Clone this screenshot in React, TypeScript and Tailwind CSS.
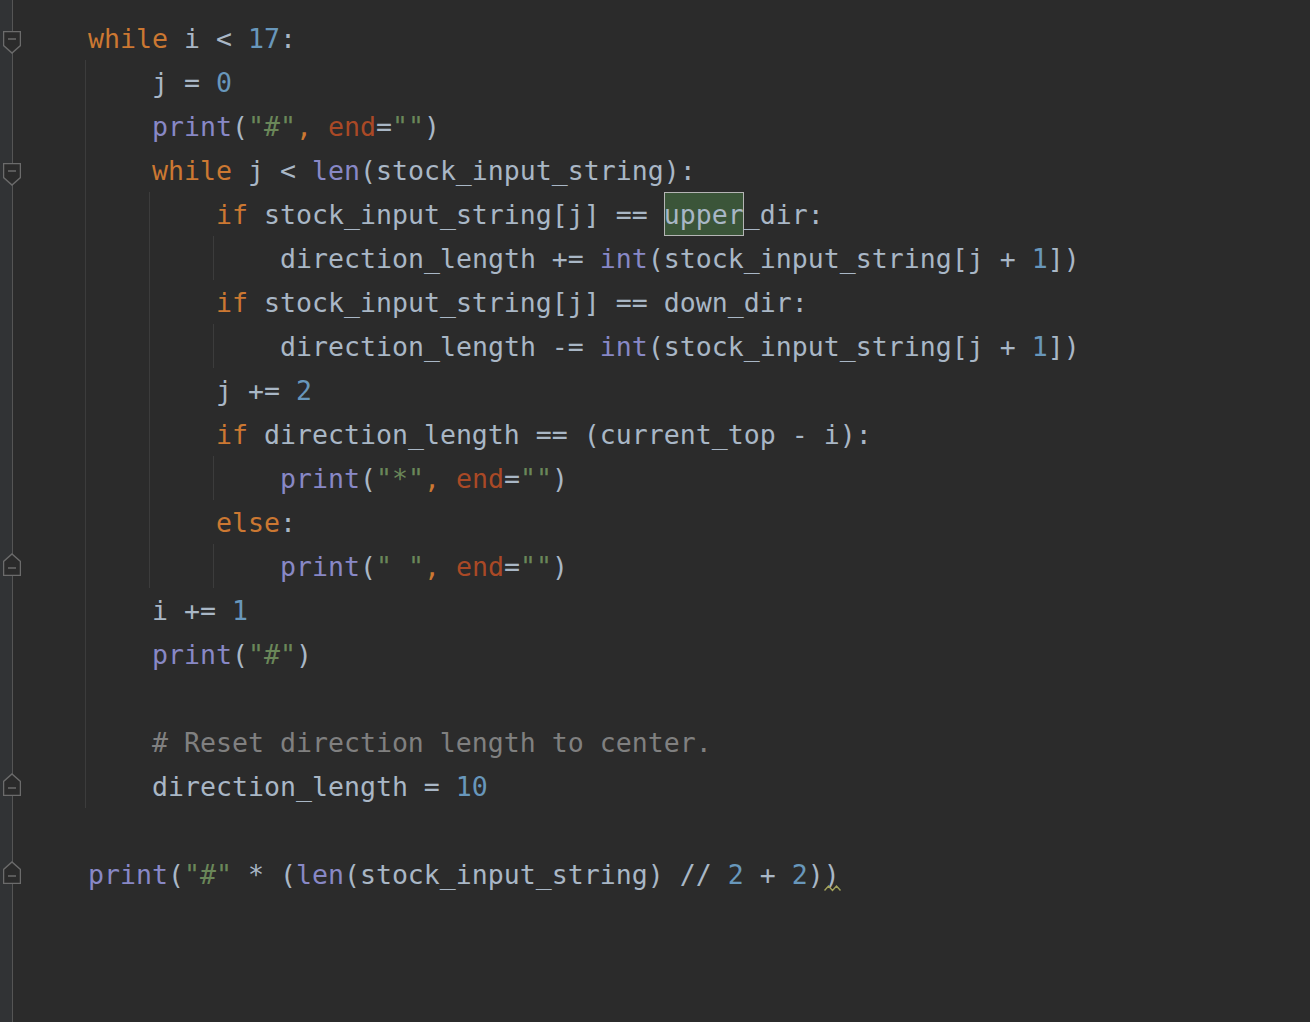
import React from 'react';

type Tok = [string, string];

// Darcula-ish token colours
const kw = 'text-[#cc7832]';
const tx = 'text-[#a9b7c6]';
const num = 'text-[#6897bb]';
const fn = 'text-[#8888c6]';
const str = 'text-[#6a8759]';
const arg = 'text-[#aa4926]';
const cmt = 'text-[#808080]';

type Line = {
  indent: number;
  guides: number[];
  fold?: 'start' | 'end';
  tokens: Tok[];
  mark?: boolean;
};

const lines: Line[] = [
  { indent: 0, guides: [], fold: 'start', tokens: [['while', kw], [' i < ', tx], ['17', num], [':', tx]] },
  { indent: 1, guides: [0], tokens: [['j = ', tx], ['0', num]] },
  { indent: 1, guides: [0], tokens: [['print', fn], ['(', tx], ['"#"', str], [', ', kw], ['end', arg], ['=', tx], ['""', str], [')', tx]] },
  { indent: 1, guides: [0], fold: 'start', tokens: [['while', kw], [' j < ', tx], ['len', fn], ['(stock_input_string):', tx]] },
  { indent: 2, guides: [0, 1], mark: true, tokens: [['if', kw], [' stock_input_string[j] == ', tx]] },
  { indent: 3, guides: [0, 1, 2], tokens: [['direction_length += ', tx], ['int', fn], ['(stock_input_string[j + ', tx], ['1', num], ['])', tx]] },
  { indent: 2, guides: [0, 1], tokens: [['if', kw], [' stock_input_string[j] == down_dir:', tx]] },
  { indent: 3, guides: [0, 1, 2], tokens: [['direction_length -= ', tx], ['int', fn], ['(stock_input_string[j + ', tx], ['1', num], ['])', tx]] },
  { indent: 2, guides: [0, 1], tokens: [['j += ', tx], ['2', num]] },
  { indent: 2, guides: [0, 1], tokens: [['if', kw], [' direction_length == (current_top - i):', tx]] },
  { indent: 3, guides: [0, 1, 2], tokens: [['print', fn], ['(', tx], ['"*"', str], [', ', kw], ['end', arg], ['=', tx], ['""', str], [')', tx]] },
  { indent: 2, guides: [0, 1], tokens: [['else', kw], [':', tx]] },
  { indent: 3, guides: [0, 1, 2], fold: 'end', tokens: [['print', fn], ['(', tx], ['" "', str], [', ', kw], ['end', arg], ['=', tx], ['""', str], [')', tx]] },
  { indent: 1, guides: [0], tokens: [['i += ', tx], ['1', num]] },
  { indent: 1, guides: [0], tokens: [['print', fn], ['(', tx], ['"#"', str], [')', tx]] },
  { indent: 1, guides: [0], tokens: [] },
  { indent: 1, guides: [0], tokens: [['# Reset direction length to center.', cmt]] },
  { indent: 1, guides: [0], fold: 'end', tokens: [['direction_length = ', tx], ['10', num]] },
  { indent: 0, guides: [], tokens: [] },
  { indent: 0, guides: [], fold: 'end', tokens: [['print', fn], ['(', tx], ['"#"', str], [' * (', tx], ['len', fn], ['(stock_input_string) // ', tx], ['2', num], [' + ', tx], ['2', num], [')', tx]] },
];

const FoldStart = () => (
  <svg width="18" height="23" viewBox="0 0 18 23" className="block">
    <path d="M0.5 0.5 H17.5 V14.5 L9 22 L0.5 14.5 Z" fill="#2b2b2b" stroke="#6b6b6b" strokeWidth="1.5" />
    <path d="M5 8 H13" stroke="#6b6b6b" strokeWidth="1.5" />
  </svg>
);

const FoldEnd = () => (
  <svg width="18" height="23" viewBox="0 0 18 23" className="block">
    <path d="M9 1 L17.5 8.5 V22.5 H0.5 V8.5 Z" fill="#2b2b2b" stroke="#6b6b6b" strokeWidth="1.5" />
    <path d="M5 15 H13" stroke="#6b6b6b" strokeWidth="1.5" />
  </svg>
);

const CodeLine = ({ line, last }: { line: Line; last: boolean }) => (
  <div className="flex h-11 items-stretch whitespace-pre leading-[44px]">
    {Array.from({ length: line.indent }).map((_, i) => (
      <span
        key={i}
        className={
          line.guides.includes(i)
            ? 'w-16 shrink-0 border-l border-[#3c3c3c]'
            : 'w-16 shrink-0 border-l border-transparent'
        }
      />
    ))}
    <span className="pl-[3px] pt-px">
      {line.tokens.map(([t, c], i) => (
        <span key={i} className={c}>
          {t}
        </span>
      ))}
      {line.mark && (
        <>
          <span className={`inline-block h-11 -mt-px align-top bg-[#3b5539] pt-px shadow-[inset_0_0_0_1px_#b5b5b5] ${tx}`}>upper</span>
          <span className={tx}>_dir:</span>
        </>
      )}
      {last && (
        <span className={`relative ${tx}`}>
          )
          <svg width="17" height="8" viewBox="0 0 17 8" className="absolute left-0 top-[25px]">
            <path d="M0.5 6.5 L4.5 2 L8.5 6.5 L12.5 2 L16.5 6.5" fill="none" stroke="#a3a35c" strokeWidth="1.4" />
          </svg>
        </span>
      )}
    </span>
  </div>
);

const App = () => {
  return (
    <div
      className="flex min-h-[1022px] w-full bg-[#2b2b2b] text-[26.57px]"
      style={{ fontFamily: '"DejaVu Sans Mono", "Liberation Mono", monospace' }}
    >
      {/* Gutter */}
      <div className="relative w-[24px] shrink-0 pt-4">
        <div className="absolute inset-y-0 left-0 w-[13px] border-r border-[#555555] bg-[#313335]" />
        {lines.map((l, i) => (
          <div key={i} className="relative h-11 pl-[3px]">
            {l.fold === 'start' && (
              <div className="pt-[15px]">
                <FoldStart />
              </div>
            )}
            {l.fold === 'end' && (
              <div className="pt-[9px]">
                <FoldEnd />
              </div>
            )}
          </div>
        ))}
      </div>

      {/* Code */}
      <div className="flex-1 pl-[61px] pt-4">
        {lines.map((l, i) => (
          <CodeLine key={i} line={l} last={i === lines.length - 1} />
        ))}
      </div>
    </div>
  );
};

export default App;
